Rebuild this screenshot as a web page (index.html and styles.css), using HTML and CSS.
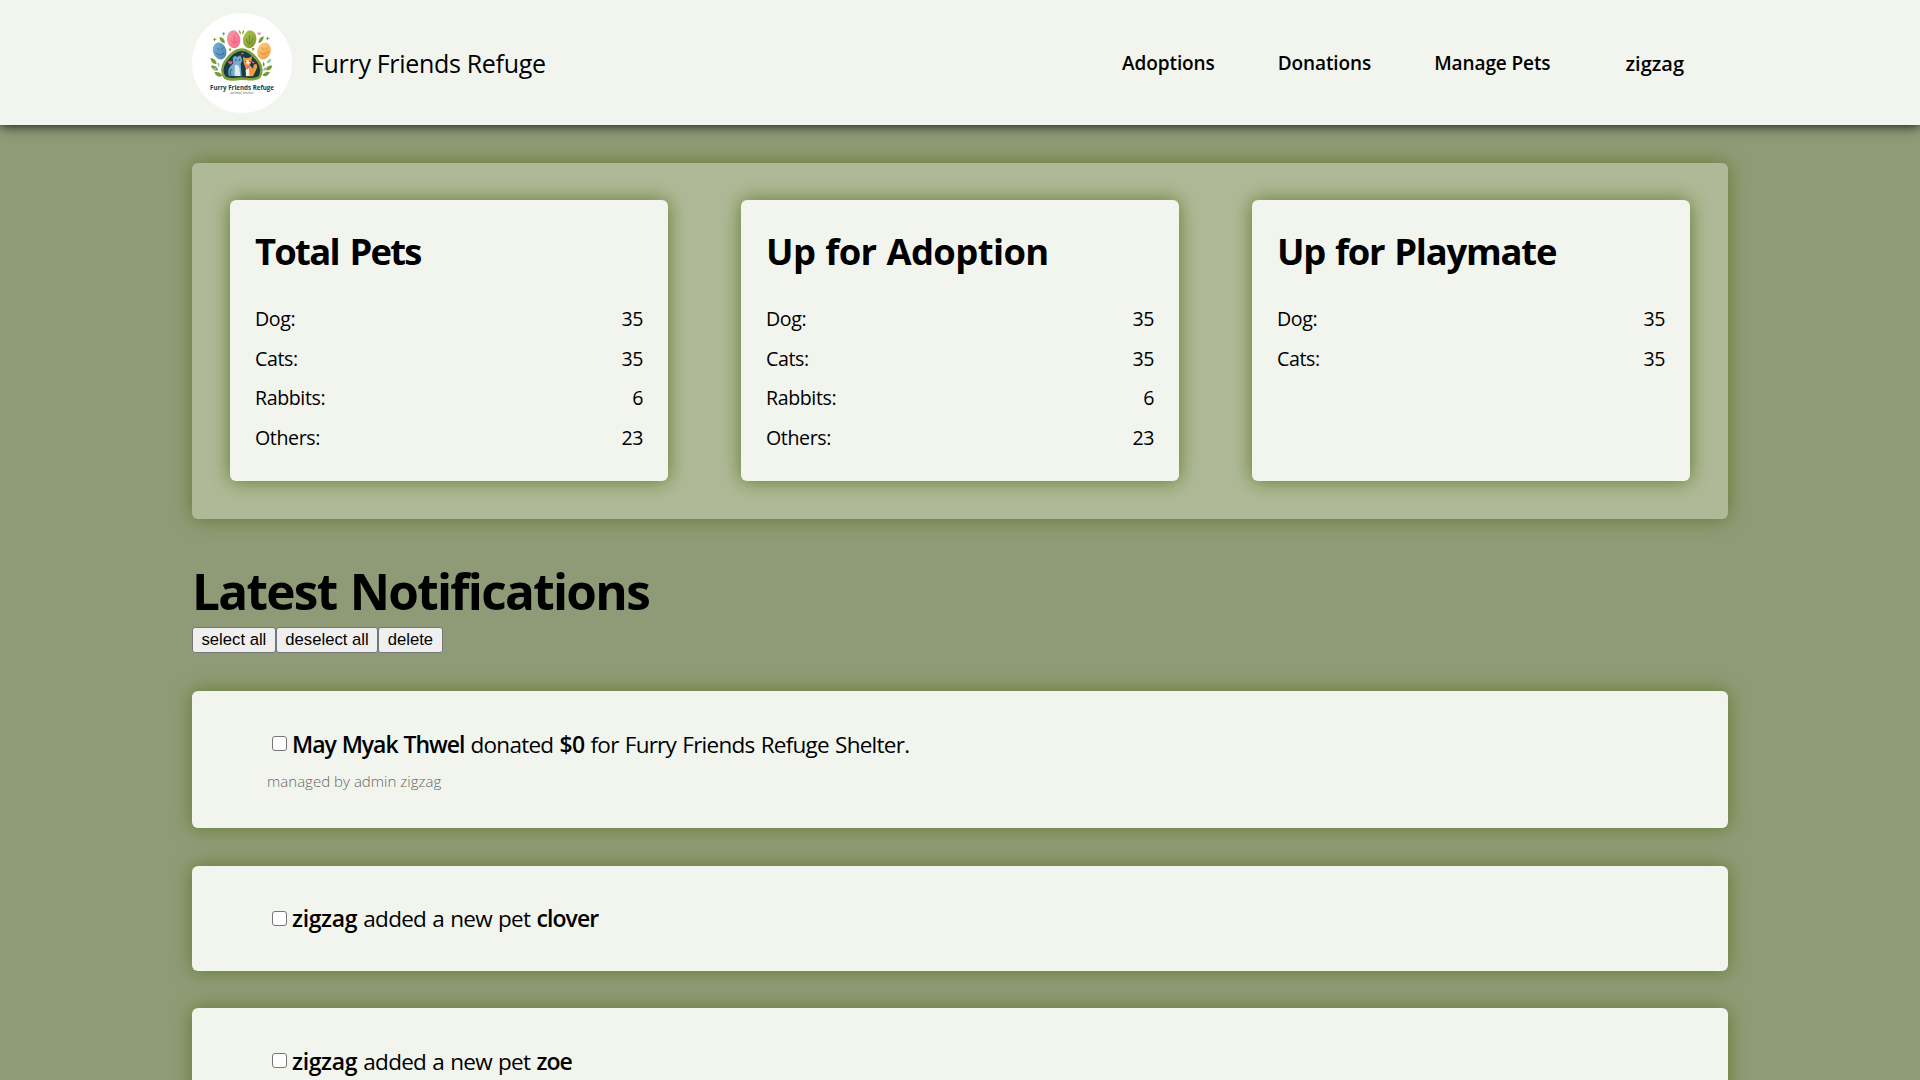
FILE: index.html
```html
<!DOCTYPE html>
<html lang="en">
<head>
<meta charset="utf-8">
<title>Furry Friends Refuge</title>
<link rel="stylesheet" href="styles.css">
</head>
<body>
<header class="site-header">
  <a class="brand">
    <svg class="logo" viewBox="36 39 300 300" aria-label="Furry Friends Refuge logo">
      <defs>
        <linearGradient id="pink" x2="1" y2="1"><stop stop-color="#f2a0a8"/><stop offset="1" stop-color="#fb6485"/></linearGradient>
        <linearGradient id="green" x2="1" y2="1"><stop stop-color="#b4c850"/><stop offset="1" stop-color="#76952a"/></linearGradient>
        <linearGradient id="blue" x2="1" y2="1"><stop stop-color="#7db9d8"/><stop offset="1" stop-color="#417fb0"/></linearGradient>
        <linearGradient id="orange" x2="1" y2="1"><stop stop-color="#ffce7d"/><stop offset="1" stop-color="#f19b42"/></linearGradient>
      </defs>
      <circle cx="186" cy="189" r="150" fill="#fff"/>
      <ellipse cx="161" cy="118" rx="20" ry="27" transform="rotate(-8 161 118)" fill="url(#pink)"/>
      <ellipse cx="209" cy="118" rx="20" ry="27" transform="rotate(8 209 118)" fill="url(#green)"/>
      <ellipse cx="119" cy="153" rx="20" ry="26" transform="rotate(-18 119 153)" fill="url(#blue)"/>
      <ellipse cx="252" cy="153" rx="20" ry="26" transform="rotate(18 252 153)" fill="url(#orange)"/>
      <g fill="none" stroke-width="2" stroke-linecap="round">
        <path d="M154 122q8 15 16 1M163 109v17" stroke="#e0506f"/>
        <path d="M199 116q3 15 8 17 9-6 12-19M208 108v20" stroke="#587522"/>
        <path d="M107 156q8 16 24 4M113 145l4 5M128 143l-3 6" stroke="#285e8c"/>
        <path d="M240 157q12 13 24-3M246 144l3 5M260 143l-3 5" stroke="#c97732"/>
      </g>
      <path d="M185 149C205 149 222 166 236 185C247 201 246 220 238 231C224 243 204 236 185 236C166 236 148 243 135 233C124 220 125 201 135 185C148 166 165 149 185 149Z" fill="#173c42" stroke="#7f9f38" stroke-width="8"/>
      <path d="M146 227C142 207 150 200 160 190L158 174L165 167L171 171L181 166L187 180L182 192L185 229Z" fill="#76a9cc"/>
      <path d="M164 196Q175 190 178 203L181 228H164Z" fill="#dceaf2"/>
      <path d="M155 207Q147 218 153 227" fill="none" stroke="#356f9d" stroke-width="4"/>
      <path d="M191 188L189 170L198 175L208 173L216 168L214 186L209 195L219 206L221 194L229 191L232 200L227 213L219 229H197L200 213Z" fill="#f39a45"/>
      <path d="M195 184L203 179L211 185L205 194ZM197 209L207 202L208 227H198Z" fill="#fff2df"/>
      <path d="M202 208q-13-10-4-13 3 0 4 3 5-6 8 1 1 4-8 9Z" fill="#f46883"/>
      <g fill="#163c43"><circle cx="168" cy="180" r="2"/><circle cx="179" cy="180" r="2"/><circle cx="197" cy="184" r="2"/><circle cx="209" cy="184" r="2"/></g>
      <path d="M151 194q-11-8-4-12 3 0 4 3 4-5 7 0 1 4-7 9ZM219 191q-6-5-3-7 2 0 3 2 4-3 5 0 0 2-5 5ZM187 164q-6-5-3-7 2 0 3 2 4-3 5 0 0 2-5 5Z" fill="#e95682"/>
      <g fill="#7c9a32">
        <path d="M118 111Q133 111 135 130Q120 129 118 111ZM252 109Q236 111 235 130Q249 128 252 109Z"/>
        <path d="M91 174Q108 174 110 192Q94 193 91 174ZM93 197Q110 195 115 211Q97 214 93 197ZM103 217Q119 212 127 228Q110 235 103 217Z"/>
        <path d="M277 197Q263 194 257 210Q272 215 277 197ZM270 217Q257 211 247 226Q260 235 270 217ZM249 185Q258 193 251 200Q246 194 249 185Z"/>
        <path d="M176 90Q184 93 182 104Q177 99 176 90ZM193 90Q185 93 187 104Q192 99 193 90ZM145 147l9-2-3 10ZM224 145l-9-1 4 10Z"/>
        <path d="M104 112l2 5 5 1-5 2-2 5-2-5-4-2 4-1ZM131 95l2 5 4 1-4 2-2 5-2-5-4-2 4-1ZM263 109l2 5 5 1-5 2-2 5-2-5-5-2 5-1Z"/>
      </g>
      <g fill="#8fc8b5"><path d="M113 187Q122 191 117 202Q111 196 113 187ZM99 203Q110 202 111 213Q101 213 99 203ZM274 177Q260 178 261 190Q272 190 274 177ZM260 201Q249 202 250 213Q260 211 260 201Z"/></g>
      <path d="M237 106q-7-6-3-9 2 0 3 2 4-3 6 0 0 3-6 7Z" fill="#f17b9a"/>
      <text class="logo-name" x="90" y="270" textLength="192" lengthAdjust="spacingAndGlyphs">Furry Friends Refuge</text>
      <text class="logo-sub" x="151" y="283" textLength="71" lengthAdjust="spacingAndGlyphs">animal shelter</text>
    </svg>
    <span class="brand-name">Furry Friends Refuge</span>
  </a>
  <nav class="nav">
    <a class="nav-link">Adoptions</a>
    <a class="nav-link">Donations</a>
    <a class="nav-link">Manage Pets</a>
    <a class="nav-link nav-user">zigzag</a>
  </nav>
</header>
<main class="content">
  <section class="stats">
    <article class="card">
      <h2 class="card-title title-total">Total Pets</h2>
      <dl class="rows">
        <div class="row"><dt>Dog:</dt><dd>35</dd></div>
        <div class="row"><dt>Cats:</dt><dd>35</dd></div>
        <div class="row"><dt>Rabbits:</dt><dd>6</dd></div>
        <div class="row"><dt>Others:</dt><dd>23</dd></div>
      </dl>
    </article>
    <article class="card">
      <h2 class="card-title title-adoption">Up for Adoption</h2>
      <dl class="rows">
        <div class="row"><dt>Dog:</dt><dd>35</dd></div>
        <div class="row"><dt>Cats:</dt><dd>35</dd></div>
        <div class="row"><dt>Rabbits:</dt><dd>6</dd></div>
        <div class="row"><dt>Others:</dt><dd>23</dd></div>
      </dl>
    </article>
    <article class="card">
      <h2 class="card-title title-playmate">Up for Playmate</h2>
      <dl class="rows">
        <div class="row"><dt>Dog:</dt><dd>35</dd></div>
        <div class="row"><dt>Cats:</dt><dd>35</dd></div>
      </dl>
    </article>
  </section>
  <h1 class="heading">Latest Notifications</h1>
  <div class="actions">
    <button class="btn">select all</button><button class="btn">deselect all</button><button class="btn">delete</button>
  </div>
  <section class="notices">
    <article class="notice">
      <p class="notice-line"><input class="check" type="checkbox"><span><b class="donor">May Myak Thwel</b> donated <b>$0</b> for Furry Friends Refuge Shelter.</span></p>
      <p class="notice-meta">managed by admin zigzag</p>
    </article>
    <article class="notice">
      <p class="notice-line"><input class="check" type="checkbox"><span><b class="admin">zigzag</b> added a new pet <b class="pet">clover</b></span></p>
    </article>
    <article class="notice">
      <p class="notice-line"><input class="check" type="checkbox"><span><b class="admin">zigzag</b> added a new pet <b class="pet">zoe</b></span></p>
    </article>
  </section>
</main>
</body>
</html>
```
FILE: styles.css
```css
* { box-sizing: border-box; margin: 0; padding: 0; }

body {
  height: 1080px;
  overflow: hidden;
  background: #8f9b76;
  color: #000;
  font-family: "Segoe UI", "Open Sans", "Noto Sans", sans-serif;
  font-size: 20px;
}

.site-header {
  display: flex;
  align-items: center;
  justify-content: space-between;
  height: 125px;
  padding: 0 192px;
  background: #f2f5ee;
  box-shadow: 0 0 12px #000;
  position: relative;
}
.brand { display: flex; align-items: center; gap: 19px; }
.logo { width: 100px; height: 100px; display: block; }
.logo-name { font: bold 19px "Open Sans", sans-serif; fill: #173f43; }
.logo-sub { font: 11px "Open Sans", sans-serif; fill: #426064; }
.brand-name { padding-top: 1px; font-size: 25px; font-weight: 500; letter-spacing: -0.32px; }
.nav { display: flex; align-items: center; gap: 63px; padding-right: 44px; }
.nav-link { font-size: 19px; font-weight: 600; letter-spacing: -0.1px; }
.nav-user { padding: 2px 0 0 12px; font-size: 20px; letter-spacing: 0; }

.content { padding: 38px 192px 0; }
.stats {
  display: grid;
  grid-template-columns: repeat(3, 438px);
  justify-content: space-between;
  height: 356px;
  padding: 37px 38px 38px;
  border-radius: 6px;
  background: #afb997;
  box-shadow: 0 0 19px #64792f;
}
.card {
  padding: 26px 25px 22px;
  border-radius: 6px;
  background: #f2f5ee;
  box-shadow: 0 0 19px #64792f;
}
.card-title { font-size: 36.4px; line-height: 50px; font-weight: 700; white-space: nowrap; }
.title-total { letter-spacing: -1.75px; word-spacing: 3px; }
.title-adoption { letter-spacing: -0.6px; word-spacing: 1px; }
.title-playmate { letter-spacing: -1.2px; word-spacing: 1.5px; }
.rows { margin-top: 23px; }
.row { display: flex; justify-content: space-between; line-height: 39.6px; font-size: 19.6px; font-weight: 400; letter-spacing: -0.4px; }

.heading { margin-top: 39px; font-size: 49.5px; line-height: 66px; font-weight: 700; letter-spacing: -1.7px; word-spacing: 2px; }
.actions { display: flex; margin-top: 3px; }
.btn {
  height: 26px;
  padding: 0 8.5px;
  border: 1px solid #767676;
  border-radius: 3px;
  background: #efefef;
  color: #000;
  font: 16.667px "Liberation Sans", Arial, sans-serif;
  line-height: 22px;
}

.notices { display: flex; flex-direction: column; gap: 37.5px; margin-top: 38px; }
.notice {
  padding: 37px 75px;
  border-radius: 6px;
  background: #f2f5ee;
  box-shadow: 0 0 19px #64792f;
}
.notice-line { display: flex; align-items: center; height: 31px; font-size: 22.5px; font-weight: 400; letter-spacing: -0.75px; word-spacing: 1.1px; white-space: nowrap; }
.notice-line b { font-size: 23px; font-weight: 600; }
.donor { letter-spacing: -1.05px; }
.admin { letter-spacing: -0.35px; }
.pet { letter-spacing: -0.9px; }
.check {
  appearance: none;
  width: 15px;
  height: 15px;
  margin: 0 5px 0 5px;
  border: 1px solid #767676;
  border-radius: 3px;
  background: #fff;
}
.notice-meta { margin-top: 12px; font-size: 15px; line-height: 20px; font-weight: 300; letter-spacing: 0.03px; color: #666; }
```
